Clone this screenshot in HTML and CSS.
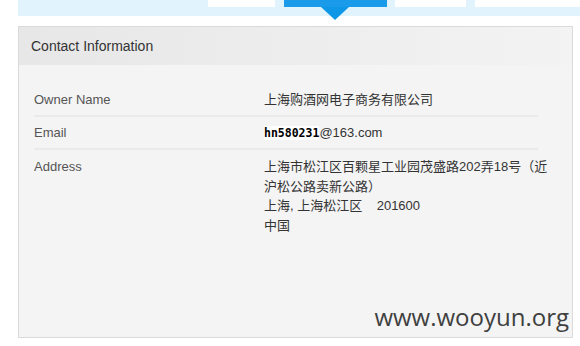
FILE: index.html
```html
<!DOCTYPE html>
<html>
<head>
  <title>Contact Information</title>
  <meta charset="utf-8">
  <link rel="stylesheet" href="styles.css">
</head>
<body>

  <div class="tabBar">
    <div class="tab"></div>
    <div class="tab active"></div>
    <div class="tab"></div>
    <div class="tab last"></div>
  </div>

  <div class="panel">
    <div class="panelHead">Contact Information</div><!--标题-->
    <div class="panelBody">
      <div class="row">
        <div class="label">Owner Name</div>
        <div class="value">上海购酒网电子商务有限公司</div>
      </div>
      <div class="row">
        <div class="label">Email</div>
        <div class="value"><span class="mailName">hn580231</span>@163.com</div>
      </div>
      <div class="row last">
        <div class="label">Address</div>
        <div class="value">
          上海市松江区百颗星工业园茂盛路202弄18号（近沪松公路卖新公路）<br>
          上海, 上海松江区&nbsp;&nbsp;&nbsp; 201600<br>
          中国
        </div>
      </div>
    </div>
    <div class="mark">www.wooyun.org</div><!--水印-->
  </div>

</body>
</html>
```

FILE: styles.css
```css
body {
  margin: 0;
  background: #fff;
  font-family: "Liberation Sans", "Noto Sans CJK SC", sans-serif;
}

/* 顶部标签 */
.tabBar {
  display: flex;
  gap: 9px;
  margin-left: 18px;
  padding-left: 190px;
  height: 16px;
  background: #e1f3fd;
}
.tab {
  position: relative;
  width: 67px;
  height: 7px;
  background: #fff;
}
.tab.active {
  width: 103px;
  margin-right: -1px;
  background: #1a9be9;
}
.tab.active:after {
  content: "";
  position: absolute;
  left: 37px;
  top: 7px;
  border-left: 14px solid transparent;
  border-right: 14px solid transparent;
  border-top: 13px solid #0f97e7;
}
.tab:nth-child(3) {
  width: 71px;
}
.tab.last {
  flex: 1;
}

/* 面板 */
.panel {
  position: relative;
  margin: 10px 0 0 18px;
  width: 553px;
  height: 310px;
  border: 1px solid #dadada;
  background: #f4f4f4;
}
.panelHead {
  height: 38px;
  line-height: 38px;
  padding-left: 12px;
  font-size: 14px;
  color: #333;
  background: linear-gradient(to right, #e7e7e7, #f3f3f3);
}
.panelBody {
  padding: 19px 0 0 15px;
}
.row {
  display: grid;
  grid-template-columns: 230px 290px;
  width: 504px;
  height: 19px;
  padding: 6px 0;
  border-bottom: 2px solid #eaeaea;
  font-size: 13px;
  line-height: 19px;
}
.row.last {
  height: auto;
  padding-top: 7px;
  line-height: 19.5px;
  border-bottom: none;
}
.label {
  color: #555;
}
.value {
  color: #333;
}
.mailName {
  font-family: "DejaVu Sans Mono", monospace;
  font-weight: bold;
  font-size: 11.5px;
  line-height: 1;
  color: #000;
  background: #fff;
}

.mark {
  position: absolute;
  right: 3px;
  bottom: 4px;
  font-family: "Open Sans", sans-serif;
  font-size: 24px;
  color: #404040;
}
```
